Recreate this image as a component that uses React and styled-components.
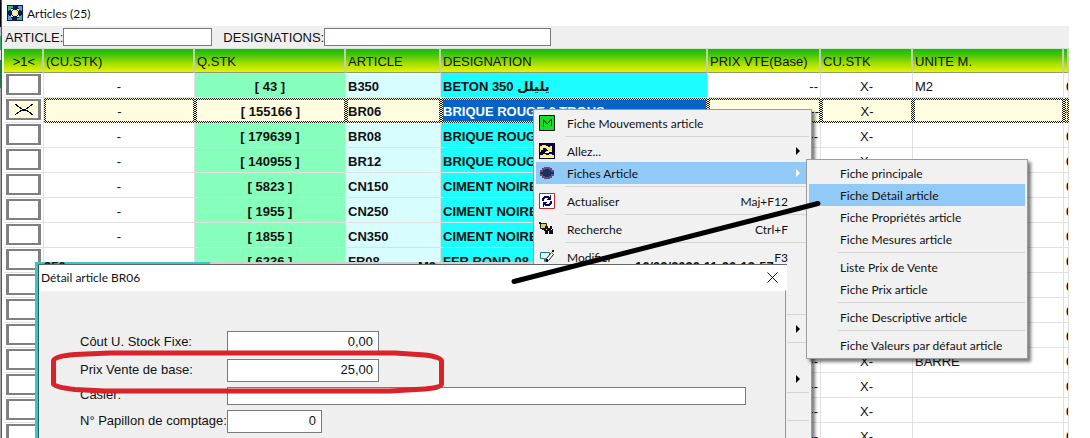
import React from 'react';
import styled, { createGlobalStyle, css } from 'styled-components';

const GlobalStyle = createGlobalStyle`
  *, *::before, *::after { box-sizing: border-box; }
  body { margin: 0; background: #fff; }
  body, button, input, table {
    font-family: "Liberation Sans", Arial, "DejaVu Sans", sans-serif;
    font-size: 13px;
    color: #111;
  }
`;

const uiFont = css`
  font-family: Lato, "Open Sans", sans-serif;
  font-size: 12px;
`;

const Desktop = styled.main`
  position: relative;
  display: flex;
  height: 100vh;
  overflow: hidden;
`;

const EdgeStrip = styled.div`
  flex: none;
  width: 2px;
  border-right: 1px solid #555;
  background: linear-gradient(#000 27px, #b9b9c6 27px 36px, #3fa06a 36px 50px, #ddd 50px 60px, #1d7c3c 60px 88px, #a5a5a5 88px);
`;

const Window = styled.section`
  flex: 1;
  min-width: 0;
  margin-right: 21px;
`;

const TitleBar = styled.header`
  ${uiFont}
  display: flex;
  align-items: center;
  gap: 4px;
  height: 26px;
  padding-left: 5px;
`;

const Title = styled.h1`
  margin: 0;
  font-size: inherit;
  font-weight: 400;
`;

const FilterBar = styled.form`
  display: flex;
  align-items: center;
  gap: 11px;
  height: 22px;
  padding-left: 3px;
  background: #efefef;
`;

const FilterField = styled.label`
  display: flex;
  align-items: center;
`;

const TextBox = styled.input`
  width: ${(p) => p.$width}px;
  height: ${(p) => p.$height || 18}px;
  padding: 0 5px 2px;
  border: 1px solid #7a7a7a;
  border-radius: 0;
  background: #fff;
  outline: none;
  text-align: ${(p) => p.$align || 'left'};
`;

const GridFrame = styled.div`
  padding-left: 2px;
  overflow: hidden;
`;

const Grid = styled.table`
  width: 100%;
  table-layout: fixed;
  border-collapse: separate;
  border-spacing: 0;
`;

const HeadCell = styled.th`
  height: 25px;
  padding: 2px 0 0 2px;
  border-top: 1px solid #d5e8d5;
  border-right: 2px solid #c4cfae;
  border-bottom: 1px solid #8d9a78;
  background: linear-gradient(#17b90b, #4dc808 30%, #a9e000 65%, #e6f400);
  font-weight: 400;
  text-align: ${(p) => p.$align || 'left'};
  white-space: nowrap;
  overflow: hidden;
`;

const tints = { mint: '#86ffbd', ice: '#d7fdff', cyan: '#1cfdff', plain: '#fff' };

const Cell = styled.td`
  height: 25px;
  padding: 3px 2px 0;
  border-right: 1px solid #e0e0e0;
  border-bottom: 1px solid #e0e0e0;
  background: ${(p) => tints[p.$tint || 'plain']};
  font-weight: ${(p) => (p.$bold ? 700 : 400)};
  text-align: ${(p) => p.$align || 'left'};
  white-space: nowrap;
  overflow: hidden;
  ${(p) => p.$selected && css`
    padding: 2px 0 0;
    border: 2px solid transparent;
    background:
      linear-gradient(${p.$current ? '#0563c8' : '#fffde0'} 0 0) padding-box,
      repeating-conic-gradient(#111 0 25%, #fffde0 0 50%) 0 0 / 2px 2px border-box;
    color: ${p.$current ? '#fff' : '#111'};
  `}
`;

const TickCell = styled.td`
  height: 25px;
  padding: 0 0 1px 2px;
  border-right: 1px solid #e0e0e0;
  border-bottom: 1px solid #e0e0e0;
  background: #fff;
`;

const TickLabel = styled.label`
  display: grid;
  width: 35px;
  height: 21px;
  > * { grid-area: 1 / 1; }
  > svg { place-self: center; pointer-events: none; }
`;

const Tick = styled.input`
  appearance: none;
  width: 35px;
  height: 21px;
  margin: 0;
  border: solid #808080;
  border-width: 2px 3px;
  background: #fff;
  &:checked { background: #fffde0; }
`;

const popup = css`
  position: absolute;
  padding: 2px;
  border: 1px solid #9c9c9c;
  background: #f1f1f1;
  box-shadow: 3px 3px 3px rgba(0, 0, 0, 0.5);
`;

const ContextMenu = styled.div`
  ${popup}
  left: 533px;
  top: 109px;
  width: 279px;
  height: 400px;
`;

const SubMenu = styled.div`
  ${popup}
  left: 806px;
  top: 159px;
  width: 222px;
`;

const MenuItem = styled.button`
  ${uiFont}
  display: grid;
  grid-template-columns: 31px 1fr auto 21px;
  align-items: center;
  width: 100%;
  height: 22px;
  padding: 0;
  border: 0;
  background: ${(p) => (p.$active ? '#91c9f7' : 'transparent')};
  text-align: left;
  white-space: nowrap;
  > svg:first-child { margin-left: 3px; }
`;

const SubMenuItem = styled(MenuItem)`
  display: block;
  padding-left: 31px;
`;

const Separator = styled.hr`
  height: 6px;
  margin: 0 0 0 29px;
  border: 0;
  background: linear-gradient(#d4d4d4 0 0) 0 2px / 100% 1px no-repeat;
`;

const DialogStack = styled.div`
  position: absolute;
  left: 35px;
  top: 262px;
  width: 752px;
  border-left: 3px solid #3cc3c3;
`;

const BackRow = styled.div`
  display: grid;
  grid-template-columns: 172px 202px 217px 1fr;
  height: 2px;
  overflow: hidden;
  background: linear-gradient(90deg, #3cc3c3 172px, #cfcfcf 172px 495px, transparent 495px);
  font-weight: 700;
  line-height: 9px;
  > span { padding-left: 6px; }
`;

const Dialog = styled.section`
  height: 260px;
  border-left: 1px solid #265e5e;
  border-top: 1px solid #666;
  background: #efefef;
`;

const DialogTitle = styled.header`
  ${uiFont}
  display: flex;
  align-items: center;
  justify-content: space-between;
  height: 25px;
  padding-left: 2px;
  background: #fff;
`;

const CloseButton = styled.button`
  display: grid;
  place-items: center;
  width: 30px;
  height: 24px;
  padding: 0;
  border: 0;
  background: none;
`;

const DialogForm = styled.form`
  display: grid;
  gap: 5px;
  height: 100%;
  align-content: start;
  margin-right: 1px;
  padding: 40px 0 0 41px;
  border-top: 1px solid #fff;
  border-right: 1px solid #999;
`;

const FormRow = styled.label`
  display: grid;
  grid-template-columns: 147px 1fr;
  align-items: center;
  white-space: nowrap;
`;

const FieldName = styled.span`
  padding-bottom: 3px;
`;

const Annotation = styled.svg`
  position: absolute;
  left: 0;
  top: 0;
  pointer-events: none;
`;

const AppIcon = () => (
  <svg width="16" height="16" viewBox="0 0 16 16" aria-hidden="true">
    <path fill="#0b1a5c" d="M0 0h16v16H0z" />
    <path fill="#3fb58a" d="M1 1h5v2H4v2H2v1H1zM15 15h-5v-2h2v-2h2v-1h1z" />
    <path fill="#5b9fd6" d="M15 1h-4v2h1v2h2v1h1zM1 15h4v-2H4v-2H2v-1H1z" />
    <path fill="#ffe98c" d="M6 5h4v1h1v4h-1v1H6v-1H5V6h1zM4 4h2v1H5v1H4zM10 4h2v2h-1V5h-1zM4 10h1v1h1v1H4zM11 10h1v2h-2v-1h1z" />
    <path fill="#fff6c8" d="M7 6h2v4H7z" />
  </svg>
);

const MoveIcon = () => (
  <svg width="16" height="16" viewBox="0 0 16 16" aria-hidden="true">
    <path fill="#16df25" stroke="#111" d="M.5.5h15v15H.5z" />
    <path fill="none" stroke="#063d0a" d="M4.500 12V4.500L8 9l4.500-5V11" />
  </svg>
);

const GoIcon = () => (
  <svg width="16" height="16" viewBox="0 0 16 16" aria-hidden="true">
    <path fill="#05054c" d="M0 0h16v16H0z" />
    <path fill="#fff06a" d="M1 3h2V2h4v1h2v1h2V3h2v6h-6V8h2V7H8V6H7V5H4v2H2v2H1zM1 12h3v-1h3v1h3v-1h3v1h2v2H1z" />
    <path fill="#fff" d="M6 9h4v1H6zM1 14h14v1H1z" />
  </svg>
);

const CardIcon = () => (
  <svg width="16" height="16" viewBox="0 0 16 16" aria-hidden="true">
    <path fill="#6b4a7c" d="M5 2h6v1h2v2h2v6h-2v2h-2v1H5v-1H3v-2H1V5h2V3h2z" />
    <path fill="#16335f" d="M6 4h4v1h2v2h3v2h-3v2h-2v1H6v-1H4V9H1V7h3V5h2z" />
  </svg>
);

const RefreshIcon = () => (
  <svg width="16" height="16" viewBox="0 0 16 16" aria-hidden="true">
    <path fill="#fff" stroke="#c0282d" d="M.5.5h15v15H.5z" />
    <path fill="#070764" d="M5 3h5v1h1V2h1v5H8V6h1V5H6v1H5v2H3V5h1V4h1zM11 13H6v-1H5v2H4V9h4v1H7v1h3v-1h1V8h2v3h-1v1h-1z" />
  </svg>
);

const SearchIcon = () => (
  <svg width="16" height="16" viewBox="0 0 16 16" aria-hidden="true">
    <path fill="#d8d05a" stroke="#222" d="M1.500 2.500h6v5h-6z" />
    <path fill="#111" d="M0 1h2v2H0zM6 5h3v2h2V5h2v3h1v5h-4v-3H9v3H6v-3H5V7h1zM3 8h3v1H3z" />
    <path fill="#fff" d="M7 8h1v1H7zM12 8h1v1h-1z" />
  </svg>
);

const EditIcon = () => (
  <svg width="16" height="16" viewBox="0 0 16 16" aria-hidden="true">
    <path fill="none" stroke="#16807e" d="M1.500 3.500h9v6h-4v3h-1v-3h-4z" />
    <path fill="#fff" stroke="#222" d="M7.500 12.500v-3l5-6 2 2-5 6z" />
    <path fill="#e8d94a" d="M12 3l2-2 1 1-1 3z" />
    <path fill="#111" d="M7 10h2v3H7zM13 1h2v2h-2z" />
  </svg>
);

const Arrow = ({ light }) => (
  <svg width="12" height="8" viewBox="0 0 12 8" aria-hidden="true">
    <path fill={light ? '#fff' : '#000'} d="M8 0v8l4-4z" />
  </svg>
);

const CrossMark = () => (
  <svg width="20" height="13" viewBox="0 0 20 13" aria-hidden="true" shapeRendering="crispEdges">
    <path fill="none" stroke="#000" d="M1 1l4 3 3 2h4l3-2 4-3M1 12l4-3 3-2h4l3 2 4 3M8 6.500h4" />
  </svg>
);

const columns = [
  { title: '>1<', width: 40 },
  { title: '(CU.STK)', width: 151 },
  { title: 'Q.STK', width: 151 },
  { title: 'ARTICLE', width: 95 },
  { title: 'DESIGNATION', width: 267 },
  { title: 'PRIX VTE(Base)', width: 113 },
  { title: 'CU.STK', width: 92 },
  { title: 'UNITE M.', width: 151 },
  { title: 'U' },
];

const articles = [
  { qty: '[ 43 ]', code: 'B350', name: 'BETON 350 يليلل', unit: 'M2' },
  { qty: '[ 155166 ]', code: 'BR06', name: 'BRIQUE ROUGE 6 TROUS', selected: true },
  { qty: '[ 179639 ]', code: 'BR08', name: 'BRIQUE ROUGE' },
  { qty: '[ 140955 ]', code: 'BR12', name: 'BRIQUE ROUGE' },
  { qty: '[ 5823 ]', code: 'CN150', name: 'CIMENT NOIRE' },
  { qty: '[ 1955 ]', code: 'CN250', name: 'CIMENT NOIRE' },
  { qty: '[ 1855 ]', code: 'CN350', name: 'CIMENT NOIRE' },
  { qty: '[ 6236 ]', code: 'FR08', name: 'FER ROND 08' },
  {}, {}, {},
  { unit: 'BARRE' },
  {}, {}, {},
];

const menu = [
  { label: 'Fiche Mouvements article', icon: MoveIcon }, null,
  { label: 'Allez...', icon: GoIcon, more: true },
  { label: 'Fiches Article', icon: CardIcon, more: true, active: true }, null,
  { label: 'Actualiser', icon: RefreshIcon, keys: 'Maj+F12' }, null,
  { label: 'Recherche', icon: SearchIcon, keys: 'Ctrl+F' }, null,
  { label: 'Modifier', icon: EditIcon, keys: 'F3' },
  {}, {}, null,
  { more: true }, null,
  {}, { more: true }, null,
  {}, null,
  {},
];

const cards = [
  'Fiche principale', 'Fiche Détail article', 'Fiche Propriétés article', 'Fiche Mesures article', null,
  'Liste Prix de Vente', 'Fiche Prix article', null,
  'Fiche Descriptive article', null,
  'Fiche Valeurs par défaut article',
];

const fields = [
  { label: 'Côut U. Stock Fixe:', value: '0,00', width: 152, height: 23, align: 'right' },
  { label: 'Prix Vente de base:', value: '25,00', width: 152, height: 23, align: 'right' },
  { label: 'Casier:', value: '', width: 519, height: 18 },
  { label: 'N° Papillon de comptage:', value: '0', width: 95, height: 23, align: 'right' },
];

function ArticleRow({ item }) {
  const s = item.selected;
  return (
    <tr>
      <TickCell>
        <TickLabel>
          <Tick type="checkbox" defaultChecked={s} aria-label={item.code || 'article'} />
          {s && <CrossMark />}
        </TickLabel>
      </TickCell>
      <Cell $selected={s} $align="center">-</Cell>
      <Cell $selected={s} $align="center" $bold $tint="mint">{item.qty}</Cell>
      <Cell $selected={s} $bold $tint="ice">{item.code}</Cell>
      <Cell $selected={s} $current $bold $tint="cyan">{item.name}</Cell>
      <Cell $selected={s} $align="right">--</Cell>
      <Cell $selected={s} $align="center">X-</Cell>
      <Cell $selected={s}>{item.unit}</Cell>
      <Cell $selected={s} $bold>0</Cell>
    </tr>
  );
}

export default function App() {
  return (
    <Desktop>
      <GlobalStyle />
      <EdgeStrip />
      <Window>
        <TitleBar>
          <AppIcon />
          <Title>Articles (25)</Title>
        </TitleBar>
        <FilterBar>
          <FilterField>ARTICLE:<TextBox $width={149} /></FilterField>
          <FilterField>DESIGNATIONS:<TextBox $width={227} /></FilterField>
        </FilterBar>
        <GridFrame>
          <Grid>
            <colgroup>
              {columns.map((c) => <col key={c.title} width={c.width} />)}
            </colgroup>
            <thead>
              <tr>
                {columns.map((c, i) => (
                  <HeadCell key={c.title} $align={i === 0 ? 'center' : 'left'}>{c.title}</HeadCell>
                ))}
              </tr>
            </thead>
            <tbody>
              {articles.map((a, i) => <ArticleRow key={i} item={a} />)}
            </tbody>
          </Grid>
        </GridFrame>
      </Window>

      <ContextMenu role="menu">
        {menu.map((m, i) => {
          if (!m) return <Separator key={i} />;
          const Icon = m.icon;
          return (
            <MenuItem key={i} type="button" role="menuitem" $active={m.active}>
              {Icon ? <Icon /> : <span />}
              <span>{m.label}</span>
              <span>{m.keys}</span>
              {m.more && <Arrow light={m.active} />}
            </MenuItem>
          );
        })}
      </ContextMenu>

      <DialogStack>
        <BackRow>
          <span>350</span>
          <span />
          <span>M3</span>
          <span>16/02/2020 11:20:13:57</span>
        </BackRow>
        <Dialog role="dialog" aria-label="Détail article BR06">
          <DialogTitle>
            Détail article BR06
            <CloseButton type="button" aria-label="Fermer">
              <svg width="11" height="11" viewBox="0 0 11 11" aria-hidden="true">
                <path d="M.5.5l10 10M10.500.5l-10 10" stroke="#111" fill="none" />
              </svg>
            </CloseButton>
          </DialogTitle>
          <DialogForm>
            {fields.map((f) => (
              <FormRow key={f.label}>
                <FieldName>{f.label}</FieldName>
                <TextBox defaultValue={f.value} $width={f.width} $height={f.height} $align={f.align} />
              </FormRow>
            ))}
          </DialogForm>
        </Dialog>
      </DialogStack>

      <SubMenu role="menu">
        {cards.map((c, i) => (c
          ? <SubMenuItem key={i} type="button" role="menuitem" $active={i === 1}>{c}</SubMenuItem>
          : <Separator key={i} />
        ))}
      </SubMenu>

      <Annotation width="1090" height="438" viewBox="0 0 1090 438" fill="none" aria-hidden="true">
        <path d="M514 281.500L818 203.500" stroke="#000" strokeWidth="5" strokeLinecap="round" />
        <path
          d="M110 353H395L425 355Q441 357 441.500 361V384Q441 388 425 389L390 391H105L75 389.500Q54 387 53.500 384V361Q54 356 75 354.500Z"
          stroke="#d8232a" strokeWidth="5" strokeLinejoin="round"
        />
      </Annotation>
    </Desktop>
  );
}
